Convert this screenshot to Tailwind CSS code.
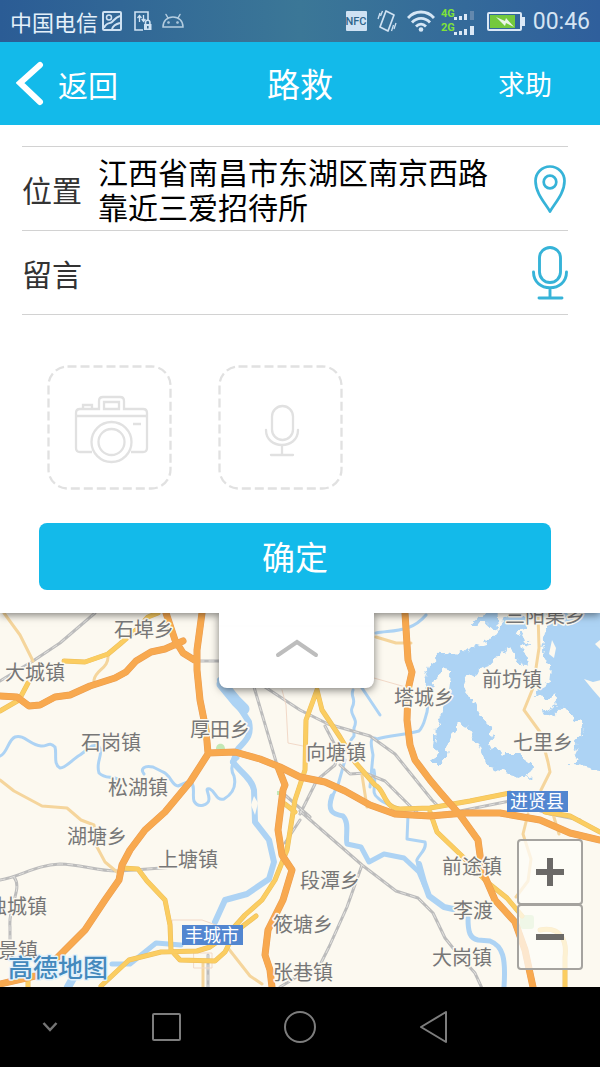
<!DOCTYPE html>
<html lang="zh-CN">
<head>
    <meta charset="UTF-8">
    <meta name="viewport" content="width=device-width, initial-scale=1.0">
    <title>路救</title>
    <script src="https://cdn.jsdelivr.net/npm/@tailwindcss/browser@4"></script>
</head>
<body class="min-h-screen flex flex-col bg-white font-['Noto_Sans_CJK_SC',sans-serif]">

    <!-- Status bar -->
    <div class="h-[42px] shrink-0 flex items-center justify-between pl-2.5 pr-2.5 bg-linear-to-r from-[#2b5c95] via-[#3b7797] to-[#2f5f9c] text-[#e4f0fa]">
        <div class="flex items-center">
            <span class="text-[22px] leading-none mr-1">中国电信</span>
            <svg class="w-5 h-5 mr-3" viewBox="0 0 20 20" fill="none" stroke="#cfe2f3" stroke-width="2">
                <rect x="1" y="1" width="18" height="18" rx="1"/>
                <circle cx="7" cy="6.500" r="2.500" stroke-width="1.500"/>
                <path d="M2 17C4 11 8 13 10 11S14 6 18 5M10 18c1-3 4-5 8-6"/>
            </svg>
            <svg class="w-[18px] h-5 mr-2.5" viewBox="0 0 18 20" fill="none" stroke="#cfe2f3" stroke-width="1.600">
                <path d="M9 19H1V1h13v8"/>
                <path d="M5.500 11V5M3.500 7l2-2.500 2 2.500M9.500 4v6M7.700 8l1.800 2.500L11.400 8" stroke-width="1.300"/>
                <rect x="10" y="13" width="7.500" height="6" fill="#cfe2f3" stroke="none"/>
                <path d="M11.500 13v-1.500a2.200 2.200 0 0 1 4.400 0V13"/>
                <path d="M13.800 15v2.500" stroke="#35698f"/>
            </svg>
            <svg class="w-[22px] h-4" viewBox="0 0 22 16" fill="none" stroke="#b4cde0" stroke-width="1.500" stroke-linecap="round">
                <path d="M1 14C1 8 5 4 11 4s10 4 10 10zM6 5 4 1.500M16 5l2-3.500"/>
                <circle cx="6.500" cy="9.500" r=".6"/>
                <circle cx="15.500" cy="9.500" r=".6"/>
            </svg>
        </div>
        <div class="flex items-center">
            <svg class="w-[21px] h-5 mr-2.5" viewBox="0 0 21 20">
                <rect width="21" height="20" rx="1" fill="#cfe2f3"/>
                <text x="10" y="14" text-anchor="middle" class="font-['Roboto',sans-serif] text-[11px] font-medium" fill="#2f668b">NFC</text>
            </svg>
            <svg class="w-5 h-[22px] mr-2.5" viewBox="0 0 20 22" fill="none" stroke="#cfe2f3" stroke-width="1.700">
                <path d="m9 1 8 4-6 16-8-4z" stroke-linejoin="round"/>
                <path d="M1 9l2-6M3.500 6l2-5M19 13l-2 6M16.500 15l-2 6" stroke-width="1.300"/>
            </svg>
            <svg class="w-7 h-[22px] mr-1.5" viewBox="0 0 28 22" fill="none" stroke="#d5e6f5" stroke-width="2.800">
                <path d="M1 8C8 0 20 0 27 8M5 12.500c5-5.500 13-5.500 18 0M9 16.500c3-3 7-3 10 0"/>
                <circle cx="14" cy="19.500" r="2.300" fill="#d5e6f5" stroke="none"/>
            </svg>
            <svg class="w-[34px] h-[30px] mr-3" viewBox="0 0 34 30" fill="#dbe8f6">
                <text x="0" y="11" class="font-['Roboto',sans-serif] text-[11px] font-bold" fill="#7fe13a">4G</text>
                <text x="0" y="25" class="font-['Roboto',sans-serif] text-[11px] font-bold" fill="#7fe13a">2G</text>
                <path d="M13 11h3v3h-3zM18 10h3v4h-3zM23 8h3v6h-3zM13 26h3v3h-3zM18 25h3v4h-3zM23 23h3v6h-3zM29 20h4v9h-4z"/>
                <path d="M29 5h4v9h-4z" fill="#6388ae"/>
            </svg>
            <svg class="w-[38px] h-[19px] mr-2" viewBox="0 0 38 19">
                <rect x="1" y="1" width="33" height="17" rx="1" fill="none" stroke="#dbe8f6" stroke-width="2"/>
                <path d="M35 5h3v9h-3z" fill="#dbe8f6"/>
                <path d="M3 3h25v13H3z" fill="#74c93e"/>
                <path d="m9 5 9 4 1-3 8 9-8-4-1 3z" fill="#eaf5e6"/>
            </svg>
            <span class="font-['Roboto',sans-serif] text-[23px] leading-none text-[#d5e4f3]">00:46</span>
        </div>
    </div>

    <!-- Title bar -->
    <header class="relative z-20 h-[83px] shrink-0 grid grid-cols-3 items-center px-4 bg-[#13baea] text-white">
        <button class="flex items-center gap-3.5 text-[30px] leading-none">
            <svg class="w-7 h-12" viewBox="0 0 28 48" fill="none" stroke="white" stroke-width="6" stroke-linecap="round" stroke-linejoin="miter">
                <path d="M24 5 4 23l20 19"/>
            </svg>
            返回
        </button>
        <h1 class="text-center text-[33px] leading-none">路救</h1>
        <button class="justify-self-end mr-8 text-[27px] leading-none">求助</button>
    </header>

    <main class="flex-1 flex flex-col">
        <!-- Form -->
        <form class="relative z-10 bg-white pt-[21px] pb-[23px] shadow-[0_2px_8px_rgba(0,0,0,0.5)]">
            <div class="ml-[22px] mr-8 border-t border-[#d2d2d2] text-[30px] text-[#333]">
                <div class="flex items-center h-[84px] border-b border-[#d2d2d2]">
                    <label for="address" class="w-[76px] shrink-0 leading-none">位置</label>
                    <textarea id="address" rows="2" class="flex-1 min-w-0 h-[70px] resize-none overflow-hidden leading-[35px] text-black outline-none">江西省南昌市东湖区南京西路
靠近三爱招待所</textarea>
                    <button type="button" aria-label="定位" class="shrink-0 pr-0.5">
                        <svg class="w-8 h-12" viewBox="0 0 32 48" fill="none" stroke="#36b3d8" stroke-width="2.700" stroke-linejoin="round">
                            <path d="M16 46.500C11 38 1.500 28 1.500 16a14.500 14.500 0 0 1 29 0C30.500 28 21 38 16 46.500z"/>
                            <circle cx="16" cy="17" r="6.300"/>
                        </svg>
                    </button>
                </div>
                <div class="flex items-center h-[84px] border-b border-[#d2d2d2]">
                    <label for="message" class="w-[76px] shrink-0 leading-none">留言</label>
                    <input id="message" type="text" class="flex-1 min-w-0 h-[70px] outline-none">
                    <button type="button" aria-label="语音输入" class="shrink-0">
                        <svg class="w-9 h-[54px]" viewBox="0 0 36 54" fill="none" stroke="#36b3d8" stroke-width="2.900" stroke-linecap="round">
                            <rect x="7.500" y="1.500" width="21" height="35" rx="10.500"/>
                            <path d="M1.500 26c0 21 33 21 33 0M18 42v10M7 52h23"/>
                        </svg>
                    </button>
                </div>
            </div>

            <div class="flex gap-[46px] mt-[50px] ml-[47px]">
                <button type="button" aria-label="拍照">
                    <svg class="size-[125px]" viewBox="0 0 125 125" fill="none" stroke="#e1e1e1" stroke-width="2.300">
                        <rect x="1.500" y="1.500" width="122" height="122" rx="19" stroke-dasharray="9 4"/>
                        <path d="M45 87H33q-4 0-4-4V48q0-4 4-4h19V36q0-4 4-4h17q4 0 4 4v8h19q4 0 4 4v35q0 4-4 4H84M29 51h71M57 44v-7h15v7zM36 44v-4h9v4M86 59h8"/>
                        <circle cx="64.500" cy="77" r="20"/>
                        <circle cx="64.500" cy="77" r="13"/>
                    </svg>
                </button>
                <button type="button" aria-label="录音">
                    <svg class="size-[125px]" viewBox="0 0 125 125" fill="none" stroke="#e1e1e1" stroke-width="2.300" stroke-linecap="round">
                        <rect x="1.500" y="1.500" width="122" height="122" rx="19" stroke-dasharray="9 4" stroke-linecap="butt"/>
                        <rect x="54" y="41" width="21" height="34" rx="10.500"/>
                        <path d="M48 65c0 20 32 20 32 0M64 80v10M53 90h22"/>
                    </svg>
                </button>
            </div>

            <div class="mt-[33px] ml-[39px] mr-[49px]">
                <button type="submit" class="w-full h-[67px] rounded-lg bg-[#13baea] text-[33px] leading-none text-white">确定</button>
            </div>
        </form>

        <!-- Map -->
        <section class="relative flex-1 min-h-[374px] bg-[#fcf9f0]">
            <svg class="absolute inset-0 w-full h-full" viewBox="0 613 600 374" preserveAspectRatio="xMidYMin slice" fill="none" stroke-linejoin="round" stroke-linecap="round">
                <defs>
                    <filter id="coast" x="-5%" y="-5%" width="110%" height="110%" color-interpolation-filters="sRGB">
                        <feTurbulence type="fractalNoise" baseFrequency=".14" numOctaves="2" seed="4"/>
                        <feDisplacementMap in="SourceGraphic" scale="12" xChannelSelector="R" yChannelSelector="G"/>
                    </filter>
                </defs>

                <!-- lakes -->
                <g fill="#add3f4" stroke="#add3f4" stroke-width="2" filter="url(#coast)">
                    <path d="M470 625l8-8 18-5 2 14-5 2-8-8-8 5z"/>
                    <path d="M510 618L502 627 490 642 467 650 462 655 442 653 433 662 428 673 425 683 423 697 431 697 433 683 442 668 453 670 450 690 448 703 437 727 435 747 440 757 431 762 442 762 448 742 458 722 468 725 478 743 488 765 510 772 528 777 530 767 522 755 507 755 493 750 488 740 493 730 482 720 472 700 463 688 465 677 480 670 490 663 500 652 510 647 517 655 523 667 527 665 525 653 518 645 527 642 525 637 513 633 525 627 520 605z"/>
                    <path d="M553 605L547 633 543 650 552 667 550 683 535 695 548 698 556 692 558 707 543 713 552 716 563 705 570 713 583 723 585 733 573 745 580 750 573 765 612 772V605z"/>
                </g>
                <path d="M552 640l4 8-2 10-5-4zM584 679l9 3 8-2v19l-8-9zM600 640l-5 4 6 6z" fill="#fcf9f0"/>

                <!-- parks -->
                <path d="M216 749c0-7 9-7 9 0zM277 791h5v4h-5z" fill="#c3e8b5"/>
                <rect x="520" y="915" width="14" height="14" rx="3" fill="#c3e8b5"/>

                <!-- rivers -->
                <g stroke="#add3f4" stroke-width="3">
                    <path d="M0 756c7-2 8-16 15-19 9-3 15 8 26 9 6 1 8-5 14 1 2 7-2 17 5 21 6 0 14-10 20-13l12-9 6-1c7 9-3 16 1 28 6 6 12 3 19 6"/>
                    <path d="M144 774c-4-5 0-9 9-7l10 5c7 2 9 14 15 14l12-5c6 5 2 14 4 20 4 8 15 4 15-2 0-7-5-11 1-10 6 3 6 12 14 10 10-6 12-15 10-23-5-9 0-15 4-18"/>
                    <path d="M353 690c-3 8 4 8-1 18-3 7 7 10 2 20v8l-3 4M345 760l-7 25-6 12M362 688l8 12 10 15M376 633c16-3 35 0 50-18M430 690l-3 22c-3 10-3 14-8 19-15 4-29 4-42 8-8-4-6 6-4 16l-3 32M374 770c3 15-4 23 4 28 8 9 22 7 30 17l-1 24 18 3c3 10-14 17-6 22"/>
                    <path d="M468 918c0 15 2 20 10 22l12 1c13 5 16 17 14 46" stroke-width="5"/>
                    <path d="M332 796c-5 15 0 18 11 20 7 7 2 20 4 28l14 3 8 15 15-8 20 4 15 14 6 14" stroke-width="5"/>
                    <path d="M419 864l5 18 5 14 15 11 9 2" stroke-width="6"/>
                </g>
                <g stroke="#add3f4" stroke-width="7">
                    <path d="M220 680l16 22 13 20c3 14-3 18-11 27l-5 13" stroke-width="6"/>
                    <path d="M222 684l14 17 8 8" stroke-width="11"/>
                    <path d="M233 762c5 8 19 16 21 28l1 32 14 18 5 22-5 17-22 15-22 6-10 22" stroke-width="6"/>
                    <path d="M112 964h18l26-21 25 2" stroke-width="5"/>
                    <path d="M76 973l-8 14" stroke-width="8"/>
                </g>
                <path d="M254 796l4 7-3 12-4-10z" fill="#fcf9f0"/>

                <!-- railways -->
                <g stroke="#bcbcbc" stroke-width="3">
                    <path id="rail" d="M95 613L60 643 33 661 0 681M199 661h22M254 687l23 78M265 687l35 23 28 14 42 12 25 18 37 46 6 6M0 880c20-3 35-15 60-16 20 0 40 8 60 7l55-4M14 877c9 12-6 28-4 50v15M325 726l13 25-3 14-18 15-17 34M300 811l62 54 34 26 22 7 15 15 12 25 12 15 18 20 11 24M362 865l-15 42-18 40-8 16M340 765l10 9 15-1 20 8 27 27 10 9M460 811l50-10 40 13 30 6M300 820l-15 23M285 795l25 22M208 955v32M280 987l20-12" />
                    <use href="#rail" stroke="#e2e1de" stroke-width="1" stroke-dasharray="5 5"/>
                </g>

                <!-- minor roads -->
                <g stroke="#f5d59c" stroke-width="3">
                    <path d="M4 613l16 22 13 26M108 655c1 14-12 14-14 25v6M0 780l14 11 28 15 25 2 14 12 13 5 3 22 8 15 12 10M376 637l20 6 15 0M538 613l1 35-6 40-9 22 16 22 8 30 2 10-9 18M362 775l5 32M528 814l-5 20 8 25-3 22-12 16M553 814l6 20M228 948l22 28 12 8M203 961v26"/>
                </g>
                <path d="M282 690l4 15 2 38 15 3M172 935v-15h30l14 5M194 953h18v15h-18zM374 678l35 10" stroke="#f2d9c8" stroke-width="1"/>

                <!-- yellow roads: casing, then fill -->
                <g stroke="#ecbe5c" stroke-width="5">
                    <path id="yellow" d="M64 661l21 1 23-8 12-10 16-14 12-13 10-4M28 683l-9 17-19 11M317 690l-11 30-1 50-10 30-8 50-12 30-13 20-17 15-18 20-17 12-13 4-36 1-32 8-28 26M317 690l5 20 18 27 15 25 20 23c10 4 8 23 25 24l30-1 40-7 40-8M430 812l7 20 25 24 25 26 20 16 15 18M545 812l25 4 30 16M122 868l16 1 9 12 18 19 5 25 1 25 9 10 35 1 10-9 10-20 21-16M285 804l10 8M28 987v-10M540 930c22-4 27 12 25 27v30"/>
                    <use href="#yellow" stroke="#fbcd61" stroke-width="4"/>
                </g>

                <!-- expressways -->
                <g stroke="#e99d52" stroke-width="7">
                    <path id="highway" d="M0 696l17 1 12 9 11-1 15-8 15-2 20-9 25-8 11-6 10-11 15-9 14-3 18-8M166 613l9 27 8 13 13 8M202 613l-5 37v20l3 30 6 30 2 23 27-1 25 7 20 8 20 10 25 5 20 9 25 14 25 9 35 2 35-3 35 0 40 7 30 13 30 7M208 754l-18 28-25 30-20 18-15 20-8 15-3 15-14 20-20 30-20 20-15 15-15 11-35 8M278 767l7 18-2 5-5 40 4 25 10 15-9 30-15 30-3 25 5 15 2 17M405 613l3 47 4 12-4 18-1 30 3 25 5 15 15 20 10 12 20 23 18 25 4 30 13 30 20 22 10 28 8 37"/>
                    <use href="#highway" stroke="#f8a94f" stroke-width="6"/>
                </g>

                <!-- place names -->
                <g class="text-[20px]" fill="#777" stroke="#fcf9f0" stroke-width="3" paint-order="stroke">
                    <text x="114" y="637">石埠乡</text>
                    <text x="5" y="680">大城镇</text>
                    <text x="190" y="737">厚田乡</text>
                    <text x="81" y="750">石岗镇</text>
                    <text x="108" y="795">松湖镇</text>
                    <text x="67" y="844">湖塘乡</text>
                    <text x="158" y="867">上塘镇</text>
                    <text x="-13" y="914">独城镇</text>
                    <text x="-22" y="958">荷景镇</text>
                    <text x="306" y="760">向塘镇</text>
                    <text x="394" y="705">塔城乡</text>
                    <text x="505" y="623">三阳集乡</text>
                    <text x="482" y="687">前坊镇</text>
                    <text x="513" y="750">七里乡</text>
                    <text x="442" y="874">前途镇</text>
                    <text x="300" y="888">段潭乡</text>
                    <text x="453" y="918">李渡</text>
                    <text x="273" y="932">筱塘乡</text>
                    <text x="432" y="965">大岗镇</text>
                    <text x="273" y="980">张巷镇</text>
                </g>
                <g fill="#5286d0">
                    <rect x="507" y="791" width="61" height="21"/>
                    <rect x="182" y="925" width="61" height="20"/>
                </g>
                <g class="text-[18px]" fill="white">
                    <text x="510" y="808">进贤县</text>
                    <text x="185" y="942">丰城市</text>
                </g>
                <text x="8" y="977" class="text-[25px] font-medium" fill="#4389bd" stroke="#e4f2fb" stroke-width="3" paint-order="stroke">高德地图</text>
            </svg>

            <!-- Collapse tab -->
            <button aria-label="收起" class="absolute top-0 left-[219px] w-[155px] h-[75px] flex items-center justify-center pb-1.5 rounded-b-lg bg-white shadow-[0_2px_8px_rgba(0,0,0,0.5)]">
                <svg class="w-11 h-5" viewBox="0 0 44 20" fill="none" stroke="#bdbdbd" stroke-width="4" stroke-linecap="round">
                    <path d="M3 17 22 4l19 13"/>
                </svg>
            </button>
            <!-- white strip that joins the tab to the panel above -->
            <div class="absolute -top-1 left-[219px] w-[155px] h-4 z-20 bg-white"></div>

            <!-- Zoom -->
            <div class="absolute right-[17px] bottom-[17px] flex flex-col">
                <button aria-label="放大" class="w-[66px] h-[66px] flex items-center justify-center rounded-sm border-2 border-[#a5a39f] bg-[#fdfcf8]/75">
                    <svg class="w-7 h-7" viewBox="0 0 28 28" stroke="#6b6967" stroke-width="6"><path d="M0 14h28M14 0v28"/></svg>
                </button>
                <button aria-label="缩小" class="w-[66px] h-[66px] -mt-px flex items-center justify-center rounded-sm border-2 border-[#a5a39f] bg-[#fdfcf8]/75">
                    <svg class="w-7 h-7" viewBox="0 0 28 28" stroke="#6b6967" stroke-width="6"><path d="M0 14h28"/></svg>
                </button>
            </div>
        </section>
    </main>

    <!-- Navigation bar -->
    <nav class="h-20 shrink-0 flex items-center pl-[34px] bg-black">
        <button aria-label="隐藏" class="w-8 flex justify-center">
            <svg class="w-4 h-3" viewBox="0 0 16 12" fill="none" stroke="#757575" stroke-width="2.500"><path d="m1.500 2 6.500 7 6.500-7"/></svg>
        </button>
        <button aria-label="最近任务" class="ml-[84px] w-8 flex justify-center">
            <svg class="w-8 h-8" viewBox="0 0 32 32" fill="none" stroke="#7d7d7d" stroke-width="2"><rect x="3" y="3" width="27" height="26" rx="1"/></svg>
        </button>
        <button aria-label="主页" class="ml-[101px] w-[34px] flex justify-center">
            <svg class="w-[34px] h-[34px]" viewBox="0 0 34 34" fill="none" stroke="#7d7d7d" stroke-width="2"><circle cx="17" cy="17" r="15"/></svg>
        </button>
        <button aria-label="返回" class="ml-[101px] w-8 flex justify-center">
            <svg class="w-8 h-8" viewBox="0 0 32 32" fill="none" stroke="#7d7d7d" stroke-width="2" stroke-linejoin="round"><path d="M28 1v30L3 16z"/></svg>
        </button>
    </nav>

</body>
</html>
